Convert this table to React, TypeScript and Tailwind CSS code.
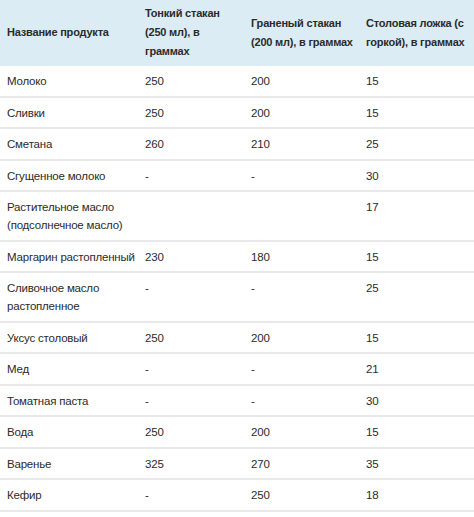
const rows: [React.ReactNode, string, string, string][] = [
  ["Молоко", "250", "200", "15"],
  ["Сливки", "250", "200", "15"],
  ["Сметана", "260", "210", "25"],
  ["Сгущенное молоко", "-", "-", "30"],
  [<>Растительное масло<br />(подсолнечное масло)</>, "", "", "17"],
  ["Маргарин растопленный", "230", "180", "15"],
  [<>Сливочное масло<br />растопленное</>, "-", "-", "25"],
  ["Уксус столовый", "250", "200", "15"],
  ["Мед", "-", "-", "21"],
  ["Томатная паста", "-", "-", "30"],
  ["Вода", "250", "200", "15"],
  ["Варенье", "325", "270", "35"],
  ["Кефир", "-", "250", "18"],
];

const th = "px-[7px] pt-[4px] pb-[5px] text-left align-middle font-bold text-[11px] leading-[19px] whitespace-nowrap";
const td = "px-[7px] pt-[6px] pb-[5.5px] align-top leading-[18px] whitespace-nowrap border-b-2 border-[#e9e9e9]";

export default function App() {
  return (
    <div className="w-[474px] bg-white text-[11.5px] tracking-[-0.2px] text-[#2b2b2b] font-['Liberation_Sans',Arial,sans-serif]">
      <table className="w-full table-fixed border-collapse">
        <colgroup>
          <col className="w-[138px]" />
          <col className="w-[106px]" />
          <col className="w-[115px]" />
          <col className="w-[115px]" />
        </colgroup>
        <thead>
          <tr className="bg-[#dcecf5]">
            <th className={th}>Название продукта</th>
            <th className={th}>Тонкий стакан<br />(250 мл), в<br />граммах</th>
            <th className={th}>Граненый стакан<br />(200 мл), в граммах</th>
            <th className={th}>Столовая ложка (с<br />горкой), в граммах</th>
          </tr>
        </thead>
        <tbody>
          {rows.map((r, i) => (
            <tr key={i}>
              <td className={td}>{r[0]}</td>
              <td className={td}>{r[1]}</td>
              <td className={td}>{r[2]}</td>
              <td className={td}>{r[3]}</td>
            </tr>
          ))}
        </tbody>
      </table>
    </div>
  );
}
